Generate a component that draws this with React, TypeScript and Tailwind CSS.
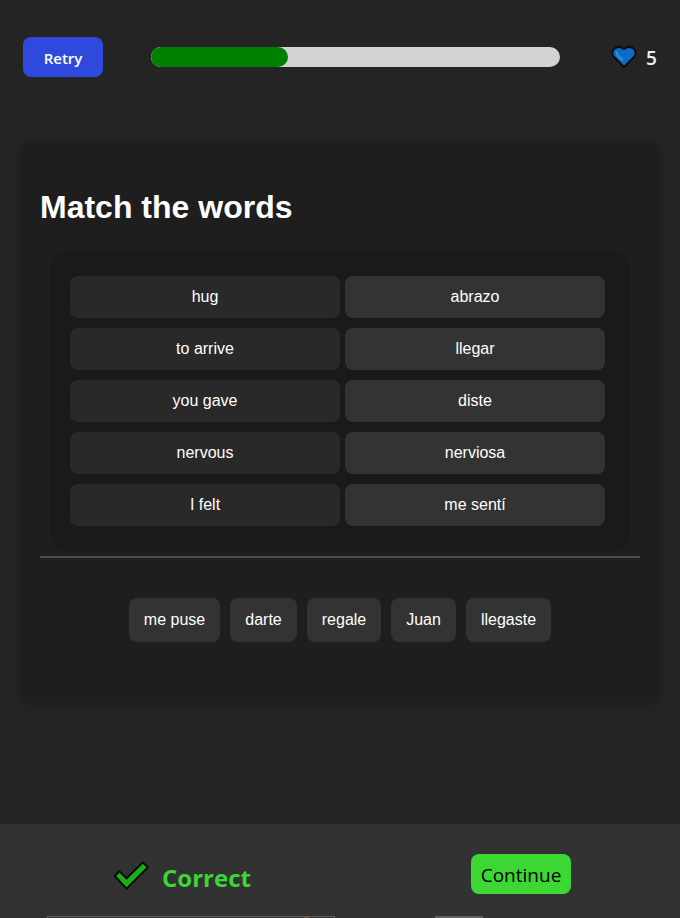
const pairs = [
  ['hug', 'abrazo'],
  ['to arrive', 'llegar'],
  ['you gave', 'diste'],
  ['nervous', 'nerviosa'],
  ['I felt', 'me sentí'],
];

const bank = [
  { word: 'me puse', width: 'w-[91px]' },
  { word: 'darte', width: 'w-[67px]' },
  { word: 'regale', width: 'w-[74px]' },
  { word: 'Juan', width: 'w-[65px]' },
  { word: 'llegaste', width: 'w-[85px]' },
];

function Heart() {
  return (
    <svg className="ml-[51px] h-[24px] w-[26px] shrink-0" viewBox="0 0 26 24">
      <path
        d="M13 22 3 12C1 9.9.9 6.2 2.9 4.1 5.4 1.4 10.3 1.2 13 4.2c2.7-3 7.6-2.8 10.1-.1 2 2.1 1.9 5.8-.1 7.9Z"
        fill="#0a6cc4"
        stroke="#0b0b0b"
        strokeWidth="1.8"
        strokeLinejoin="round"
      />
      <path d="M5.6 7.2c.2 1.7.9 2.8 2 4l3.4 3.4" fill="none" stroke="#3f88ca" strokeWidth="2.2" strokeLinecap="round" />
    </svg>
  );
}

function Check() {
  return (
    <svg className="ml-[113px] mt-[37px] h-[30px] w-[37px] shrink-0" viewBox="0 0 37 30">
      <path
        d="M1.8 15 6.4 10.4 13.5 17.5 29.7 1.6 34.9 6.2 13.5 27.6Z"
        fill="#16b116"
        stroke="#080808"
        strokeWidth="1.9"
      />
    </svg>
  );
}

export default function App() {
  return (
    <div className="flex h-[918px] w-[680px] flex-col overflow-hidden bg-[#242424] font-['Liberation_Sans',Arial,sans-serif] text-white">
      <header className="flex h-[114px] shrink-0 items-center">
        <button className="ml-[23px] h-10 w-20 rounded-lg bg-[#2f49dc] pt-[3px] font-['Open_Sans',sans-serif] text-[15px] font-semibold leading-none">
          Retry
        </button>
        <div className="ml-12 h-5 w-[409px] overflow-hidden rounded-[10px] bg-[#d3d3d3]">
          <div className="h-full w-[137px] rounded-[10px] bg-[#008000]" />
        </div>
        <Heart />
        <span className="ml-[9px] pt-[2px] font-['Open_Sans',sans-serif] text-[19px] font-semibold leading-none text-[#ededed]">5</span>
      </header>

      <main className="mx-5 mt-[27px] flex h-[561px] shrink-0 flex-col rounded-[10px] bg-[#1e1e1e] px-5 shadow-[0_4px_8px_rgba(0,0,0,0.15)]">
        <h1 className="mt-[46px] text-[32px] font-bold leading-10">Match the words</h1>
        <div className="mx-[10px] mt-6 flex h-[300px] flex-col gap-[10px] rounded-[20px] bg-[#1a1a1a] px-5 pt-[25px]">
          {pairs.map(([en, es]) => (
            <div key={en} className="flex gap-[5px]">
              <div className="flex h-[42px] w-[270px] items-center justify-center rounded-lg bg-[#292929] text-base">{en}</div>
              <div className="flex h-[42px] w-[260px] items-center justify-center rounded-lg bg-[#333333] text-base">{es}</div>
            </div>
          ))}
        </div>
        <div className="mt-[5px] h-[2px] shrink-0 bg-[#4d4d4d]" />
        <div className="mt-10 flex justify-center gap-[10px]">
          {bank.map(({ word, width }) => (
            <button key={word} className={`${width} h-11 whitespace-nowrap rounded-lg bg-[#333333] text-base`}>
              {word}
            </button>
          ))}
        </div>
      </main>

      <footer className="mt-auto flex h-[94px] shrink-0 flex-col bg-[#323232] font-['Open_Sans',sans-serif]">
        <div className="flex h-[92px] items-start">
          <Check />
          <span className="ml-3 mt-[36px] w-[90px] whitespace-nowrap text-[24px] font-bold leading-9 text-[#3cd733]">Correct</span>
          <button className="ml-[219px] mt-[30px] h-10 w-[100px] rounded-lg bg-[#3cd733] pt-[2px] text-[19px] font-medium leading-none text-black">
            Continue
          </button>
        </div>
        <div className="flex h-[2px] overflow-hidden">
          <div className="ml-[47px] flex h-2 w-[288px] justify-end border border-[#5e5e5e] pr-[25px]">
            <div className="h-1 w-[5px] bg-[#7a4c20]" />
          </div>
          <div className="ml-[100px] h-[2px] w-12 bg-[#606060]" />
        </div>
      </footer>
    </div>
  );
}
